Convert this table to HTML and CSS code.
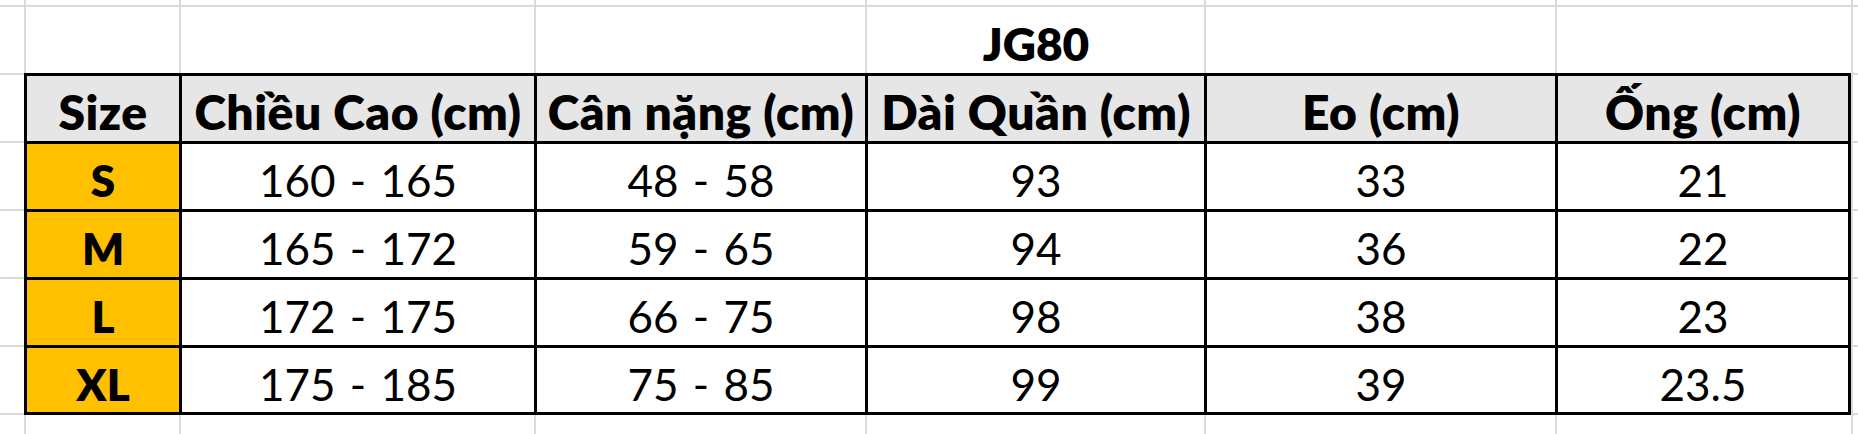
FILE: index.html
```html
<!DOCTYPE html>
<html lang="vi">
<head>
<meta charset="utf-8">
<title>JG80 size chart</title>
<link rel="stylesheet" href="styles.css">
</head>
<body>
<div class="sheet">
  <div class="title-row">
    <div class="title">JG80</div>
  </div>
  <div class="table">
    <div class="cell head">Size</div>
    <div class="cell head">Chiều Cao (cm)</div>
    <div class="cell head">Cân nặng (cm)</div>
    <div class="cell head">Dài Quần (cm)</div>
    <div class="cell head">Eo (cm)</div>
    <div class="cell head">Ống (cm)</div>

    <div class="cell size">S</div>
    <div class="cell">160 - 165</div>
    <div class="cell">48 - 58</div>
    <div class="cell">93</div>
    <div class="cell">33</div>
    <div class="cell">21</div>

    <div class="cell size">M</div>
    <div class="cell">165 - 172</div>
    <div class="cell">59 - 65</div>
    <div class="cell">94</div>
    <div class="cell">36</div>
    <div class="cell">22</div>

    <div class="cell size">L</div>
    <div class="cell">172 - 175</div>
    <div class="cell">66 - 75</div>
    <div class="cell">98</div>
    <div class="cell">38</div>
    <div class="cell">23</div>

    <div class="cell size">XL</div>
    <div class="cell">175 - 185</div>
    <div class="cell">75 - 85</div>
    <div class="cell">99</div>
    <div class="cell">39</div>
    <div class="cell">23.5</div>
  </div>
</div>
</body>
</html>
```
FILE: styles.css
```css
* { box-sizing: border-box; }

html, body {
  margin: 0;
  padding: 0;
  background: #ffffff;
}

.sheet {
  width: 1858px;
  height: 434px;
  padding-top: 7px;
  overflow: hidden;
  font-family: "Lato", "Open Sans", sans-serif;
  color: #000;
  background-color: #fff;
  background-repeat: no-repeat;
  background-image:
    linear-gradient(#dadada, #dadada),
    linear-gradient(#dadada, #dadada),
    linear-gradient(#dadada, #dadada),
    linear-gradient(#dadada, #dadada),
    linear-gradient(#dadada, #dadada),
    linear-gradient(#dadada, #dadada),
    linear-gradient(#dadada, #dadada),
    linear-gradient(#dadada, #dadada),
    linear-gradient(#dadada, #dadada),
    linear-gradient(#dadada, #dadada),
    linear-gradient(#dadada, #dadada),
    linear-gradient(#dadada, #dadada),
    linear-gradient(#dadada, #dadada),
    linear-gradient(#dadada, #dadada);
  background-size:
    2px 100%, 2px 100%, 2px 100%, 2px 100%, 2px 100%, 2px 100%, 2px 100%,
    100% 2px, 100% 2px, 100% 2px, 100% 2px, 100% 2px, 100% 2px, 100% 2px;
  background-position:
    24px 0, 179px 0, 534px 0, 865px 0, 1204px 0, 1555px 0, 1851px 0,
    0 5px, 0 73px, 0 141px, 0 209px, 0 277px, 0 345px, 0 413px;
}

.title-row {
  margin-left: 24px;
  width: 1827px;
  height: 66px;
  padding: 0 3px;
  display: grid;
  grid-template-columns: 152px 352px 328px 336px 348px 290px;
  column-gap: 3px;
}

.title {
  grid-column: 4;
  display: flex;
  align-items: center;
  justify-content: center;
  padding-top: 6px;
  font-weight: 800;
  font-size: 46px;
}

.table {
  margin-left: 24px;
  width: 1827px;
  height: 342px;
  padding: 3px;
  gap: 3px;
  background: #000;
  display: grid;
  grid-template-columns: 152px 352px 328px 336px 348px 290px;
  grid-template-rows: 65px 65px 65px 65px 64px;
}

.cell {
  background: #fff;
  display: flex;
  align-items: center;
  justify-content: center;
  padding-top: 7px;
  font-size: 44px;
  word-spacing: 3px;
  white-space: nowrap;
}

.head {
  background: #e7e6e6;
  font-weight: 800;
  font-size: 48px;
  letter-spacing: 0.5px;
  word-spacing: 0;
  padding-top: 5px;
}

.size {
  background: #ffc000;
  font-weight: 800;
}
```
